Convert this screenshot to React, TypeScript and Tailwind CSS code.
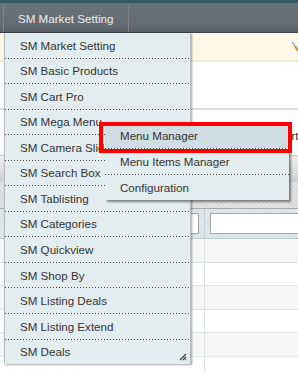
import React from 'react';

const mainItems = [
  'SM Market Setting',
  'SM Basic Products',
  'SM Cart Pro',
  'SM Mega Menu',
  'SM Camera Slider',
  'SM Search Box',
  'SM Tablisting',
  'SM Categories',
  'SM Quickview',
  'SM Shop By',
  'SM Listing Deals',
  'SM Listing Extend',
  'SM Deals',
];

const subItems = ['Menu Manager', 'Menu Items Manager', 'Configuration'];

function Dots() {
  return <div className="h-px w-full bg-[linear-gradient(to_right,#4a4a4a_1px,transparent_1px)] bg-[length:3px_1px] bg-repeat-x" />;
}

function ResizeGrip() {
  return (
    <svg width="8" height="8" viewBox="0 0 8 8" className="absolute right-[3px] bottom-[3px]">
      <path d="M7 1 L1 7 M7 4 L4 7 M7 6.5 L6.5 7" stroke="#444" strokeWidth="1.3" />
    </svg>
  );
}

export default function App() {
  return (
    <div className="relative w-[298px] h-[372px] overflow-hidden bg-white font-['Liberation_Sans',Arial,sans-serif] text-[11.6px]">
      {/* top strip */}
      <div className="h-[3px] bg-[#3a5861]" />
      <div className="h-[2px] bg-[#587881]" />

      {/* nav bar */}
      <div className="h-[28px] flex bg-[linear-gradient(#6b7279,#646b72_75%,#555b61)] border-b border-[#394046]">
        <div className="w-[3px]" />
        <div className="w-[126px] border-x border-[#7e858b] pl-[14px] flex items-center text-[#e9eef2]">
          SM Market Setting
        </div>
      </div>

      {/* message bar */}
      <div className="h-[29px] bg-[#fef7e6] border-b-2 border-[#f3e9cc] flex items-center justify-end">
        <svg width="6" height="10" viewBox="0 0 6 10">
          <path d="M0 0 L3 4" stroke="#6fa7d6" strokeWidth="1.2" />
          <path d="M3 4 L6 9" stroke="#d08b3a" strokeWidth="2" />
        </svg>
      </div>

      {/* page body */}
      <div className="h-[48px] border-b-2 border-[#dcdcdc]" />
      <div className="h-[45px] flex items-end pb-[11px] pl-[265px] text-[#333] whitespace-nowrap">Export</div>
      <div className="h-[27px] border-t border-[#c9c9c9] bg-[linear-gradient(#efefef,#cfcfcf)]" />
      <div className="h-[27px] border-b border-[#a8a8a8] bg-[repeating-linear-gradient(45deg,#d6d6d6_0_1px,#e2e2e2_1px_3px)]" />
      <div className="h-[30px] grid grid-cols-[205px_1fr] bg-[repeating-linear-gradient(45deg,#d3e0e2_0_1px,#dfe9eb_1px_3px)] border-b border-[#bfc9cb]">
        <div className="border-r border-[#c4cfd1] flex items-center pr-[5px] pl-[4px]">
          <div className="h-[21px] w-full bg-white border border-[#a9a9a9]" />
        </div>
        <div className="flex items-center pl-[5px]">
          <div className="h-[21px] w-[120px] shrink-0 bg-white border border-[#a9a9a9]" />
        </div>
      </div>
      {Array.from({ length: 6 }).map((_, i) => (
        <div key={i} className={`h-[23.5px] grid grid-cols-[205px_1fr] border-b border-[#dfe3e3] ${i % 2 === 0 ? 'bg-[#f6f6f6]' : 'bg-white'}`}>
          <div className="border-r border-[#dce2e2]" />
          <div />
        </div>
      ))}

      {/* main dropdown */}
      <div className="absolute left-[4px] top-[33px] w-[187px] bg-[#e3ecee] border-l border-r border-[#b7bcbe] shadow-[1px_1px_2px_rgba(0,0,0,0.35)] text-[#333]">
        {mainItems.map((label, i) => (
          <div key={label}>
            <div className="h-[24.55px] flex items-center pl-[15px] whitespace-nowrap">{label}</div>
            {i < mainItems.length - 1 && <Dots />}
          </div>
        ))}
        <ResizeGrip />
      </div>

      {/* sub menu */}
      <div className="absolute left-[105px] top-[123px] w-[184px] bg-[#e3ecee] shadow-[2px_2px_2px_rgba(0,0,0,0.45)] text-[#333]">
        {subItems.map((label, i) => (
          <div key={label}>
            <div className={`h-[25px] flex items-center pl-[15px] whitespace-nowrap ${i === 0 ? 'bg-[#cfdee2]' : ''}`}>{label}</div>
            {i < subItems.length - 1 && <Dots />}
          </div>
        ))}
      </div>

      {/* highlight box */}
      <div className="absolute left-[99px] top-[122px] w-[193px] h-[31px] border-4 border-[#ff0000]" />
    </div>
  );
}
